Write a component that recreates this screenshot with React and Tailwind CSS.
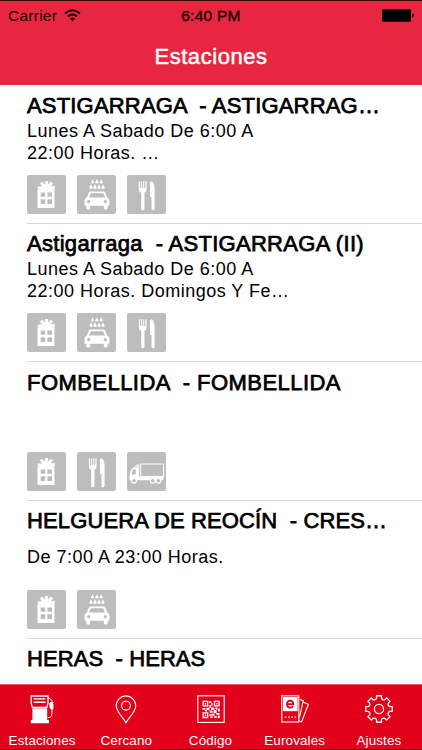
import { clsx } from 'clsx';

const stations = [
  { name: 'ASTIGARRAGA  - ASTIGARRAG…', spacing: 'tracking-[0.18px]', hours: ['Lunes A Sabado De 6:00 A', '22:00 Horas. …'], services: ['gift', 'wash', 'food'] },
  { name: 'Astigarraga  - ASTIGARRAGA (II)', spacing: 'tracking-[0.3px]', hours: ['Lunes A Sabado De 6:00 A', '22:00 Horas. Domingos Y Fe…'], services: ['gift', 'wash', 'food'] },
  { name: 'FOMBELLIDA  - FOMBELLIDA', spacing: 'tracking-[0.45px]', hours: [], services: ['gift', 'food', 'truck'] },
  { name: 'HELGUERA DE REOCÍN  - CRES…', spacing: 'tracking-[0.12px]', hours: ['De 7:00 A 23:00 Horas.'], services: ['gift', 'wash'] },
  { name: 'HERAS  - HERAS', spacing: 'tracking-[0.08px]', hours: [], services: [] },
];

function GiftIcon() {
  return (
    <svg className="size-full" viewBox="0 0 39 39" fill="#fff">
      <path fillRule="evenodd" d="M10.5 14.5H27.5V33H10.5ZM13.7 17.5V21.8H18.2V17.5ZM20.4 17.5V21.8H25V17.5ZM13.7 24.2V29H18.2V24.2ZM20.4 24.2V29H25V24.2Z" />
      <path d="M19 15.5L11 14.4L10.6 11.4L15 11.6L12.6 8.2L15.6 6.8L17.9 9.8L18 6H21L20.8 9.8L23.6 6.5L26.2 8.4L23.6 11.4L27.8 10.8L27.8 14.2Z" />
    </svg>
  );
}

function WashIcon() {
  return (
    <svg className="size-full" viewBox="0 0 39 39" fill="#fff">
      {[15.5, 19.8, 24.2].map((x) => (
        <path key={x} d={`M${x} 4.2l1.5 3a1.5 1.4 0 1 1-3 0z`} />
      ))}
      {[14, 18, 22, 26].map((x) => (
        <path key={x} d={`M${x} 9.2l1.6 3.4a1.6 1.5 0 1 1-3.2 0z`} />
      ))}
      <path
        fillRule="evenodd"
        d="M13.5 16.5H26.5Q27.7 16.5 28.2 17.6L30 22.2Q32.4 23.5 32.4 25.5V30.8H30.7V33Q30.7 34.7 28.8 34.7Q26.8 34.7 26.8 33V30.8H13.2V33Q13.2 34.7 11.2 34.7Q9.3 34.7 9.3 33V30.8H7.6V25.5Q7.6 23.5 10 22.2L11.8 17.6Q12.3 16.5 13.5 16.5ZM13.8 18.2L12 22.6H28L26.2 18.2ZM11.7 24.9A1.7 1.7 0 1 0 11.7 28.3A1.7 1.7 0 1 0 11.7 24.9ZM28.3 24.9A1.7 1.7 0 1 0 28.3 28.3A1.7 1.7 0 1 0 28.3 24.9Z"
      />
    </svg>
  );
}

function FoodIcon() {
  return (
    <svg className="size-full" viewBox="0 0 39 39" fill="#fff">
      <path d="M11.8 6.3H13.1V13H14.1V6.3H15.1V13H16.2V6.3H17.2V13H18.3V6.3H19.6V14.5Q19.6 17 17.5 17.7V33.8Q17.5 35.3 15.8 35.3Q14.2 35.3 14.2 33.8V17.7Q11.8 17 11.8 14.5Z" />
      <path d="M23 8Q23 6.2 24.6 6.2Q27.3 7.5 27.6 14V33.8Q27.6 35.3 26.1 35.3Q24.5 35.3 24.5 33.8V22H23Z" />
    </svg>
  );
}

function TruckIcon() {
  return (
    <svg className="size-full" viewBox="0 0 39 39">
      <rect x="13.6" y="12" width="23" height="12.4" fill="none" stroke="#fff" strokeWidth="1" />
      <path fill="#fff" fillRule="evenodd" d="M6 15.5H12V25H36.5V28.3H2.5V23.5L4 18ZM5.5 18.3L4.6 22.5H8.8V17.5H6Z" />
      <path d="M6 15.5L10 12.2H12.3V15.5Z" fill="#fff" opacity=".7" />
      {[7, 25.8, 31.4].map((x) => (
        <circle key={x} cx={x} cy="28.7" r="2.4" fill="#bdbdbd" stroke="#fff" strokeWidth="1.2" />
      ))}
    </svg>
  );
}

const serviceIcons = { gift: GiftIcon, wash: WashIcon, food: FoodIcon, truck: TruckIcon };

function PumpIcon() {
  return (
    <svg className="size-[30px]" viewBox="0 0 30 30" fill="none" stroke="#fff">
      <path d="M4.2 2H21V9.5L19.8 13.4H5.4L4.2 9.5Z" strokeWidth="1.3" />
      <path d="M6.6 4.9H18.6M6.6 8.2H18.6" strokeWidth="1.4" />
      <path d="M5.4 14.3H20.2V26H22V29.2H3.8V26H5.4Z" fill="#fff" stroke="none" />
      <path d="M21 3.2L25 6.4V9M25 15V19.5Q25 23 22.5 23.5L20.5 23.7" strokeWidth="1" />
      <path d="M23 8H26.4V15.2H23.6L22.4 13V9.5Z" fill="#fff" stroke="none" />
    </svg>
  );
}

function PinIcon() {
  return (
    <svg className="size-[30px]" viewBox="0 0 30 30" fill="none" stroke="#fff" strokeWidth="1.1">
      <path d="M15 28.8C12.8 24.3 5.2 17.6 5.2 11.7A9.8 9.8 0 0 1 24.8 11.7C24.8 17.6 17.2 24.3 15 28.8Z" />
      <circle cx="15" cy="11.7" r="4.4" />
    </svg>
  );
}

function QrIcon() {
  return (
    <svg className="size-[30px]" viewBox="0 0 30 30">
      <rect x="1.8" y="1.8" width="26.4" height="26.6" fill="none" stroke="#fff" strokeWidth="1.1" />
      <g fill="none" stroke="#fff" strokeWidth="1.3">
        <path d="M7.1 7.3H11.7V11.9H7.1ZM18.5 7.3H23.1V11.9H18.5ZM7.1 18.9H11.7V23.5H7.1Z" />
      </g>
      <path
        fill="#fff"
        d="M8.7 8.9h1.5v1.5h-1.5zM20.1 8.9h1.5v1.5h-1.5zM8.7 20.5h1.5v1.5h-1.5zM13.2 7h2v2h-2zM15.2 9h1.5v2.5h-1.5zM13.2 11.3h2v2.4h-2zM6.5 14h3v1.8h-3zM10.5 13.8h3v2.4h-3zM9 16h2v1.5h-2zM15 13.5h3.4v2.2h-3.4zM19.5 13.5h2v2h-2zM22 14.5h1.8v3h-1.8zM13.6 16.6h3v2.2h-3zM17.6 16h3v3h-3zM13.2 20.2h2.6v1.6h-2.6zM16.2 19.6h2.4v2.2h-2.4zM20.2 19h3.4v1.8h-3.4zM14.5 22.2h2.2v1.9h-2.2zM18.4 22h2.2v2h-2.2zM21.8 21.6h2v2.5h-2z"
      />
    </svg>
  );
}

function VoucherIcon() {
  return (
    <svg className="size-[30px]" viewBox="0 0 30 30" fill="none" stroke="#fff" strokeWidth="1.1">
      <path d="M19.6 5.5L23.3 6.7L19.4 23.5" />
      <path d="M23.4 8.3L28.4 10.2L21.6 27.7L19.5 27" />
      <rect x="1.8" y="1.8" width="17" height="26.2" />
      <rect x="3" y="3" width="14.6" height="14.2" fill="#fff" stroke="none" />
      <path d="M7.3 10.2H13.2Q13.3 6.7 10.2 6.6Q7 6.7 7 10.2Q7.1 13.6 10.3 13.7Q12.4 13.7 13.2 12.1" stroke="#e2001a" strokeWidth="1.8" />
      <path d="M4.7 23.2H16.5" strokeWidth="1.3" strokeDasharray="1.6 1.7" />
    </svg>
  );
}

function gearPath() {
  const at = (r, deg) => {
    const a = (deg * Math.PI) / 180;
    return `${(15 + r * Math.sin(a)).toFixed(2)} ${(15 - r * Math.cos(a)).toFixed(2)}`;
  };
  let d = '';
  for (let i = 0; i < 8; i++) {
    const t = i * 45;
    d += `${i ? 'L' : 'M'}${at(11.2, t - 12.5)}L${at(13.5, t - 10.5)}L${at(13.5, t + 10.5)}L${at(11.2, t + 12.5)}Q${at(9, t + 22.5)} ${at(11.2, t + 32.5)}`;
  }
  return d + 'Z';
}

function GearIcon() {
  return (
    <svg className="size-[30px]" viewBox="0 0 30 30" fill="none" stroke="#fff" strokeWidth="1.3" strokeLinejoin="round">
      <path d={gearPath()} />
      <circle cx="15" cy="15" r="4.6" />
    </svg>
  );
}

const tabs = [
  { label: 'Estaciones', Icon: PumpIcon },
  { label: 'Cercano', Icon: PinIcon },
  { label: 'Código', Icon: QrIcon },
  { label: 'Eurovales', Icon: VoucherIcon },
  { label: 'Ajustes', Icon: GearIcon },
];

function StatusBar() {
  return (
    <div className="grid grid-cols-3 items-center h-[29px] pl-2 pr-2 text-[15.5px] text-[#1c0206]">
      <div className="flex items-center gap-[7px]">
        <span className="tracking-[0.25px]">Carrier</span>
        <svg className="w-[17px] h-[13px]" viewBox="0 0 17 13" fill="none" stroke="#1c0206" strokeWidth="2">
          <path d="M1 4.6Q8.5 -2.2 16 4.6" />
          <path d="M3.9 7.6Q8.5 3.4 13.1 7.6" />
          <path d="M8.5 12.2L5.9 9.6Q8.5 7.4 11.1 9.6Z" fill="#1c0206" stroke="none" />
        </svg>
      </div>
      <span className="text-center tracking-[0.25px] [-webkit-text-stroke:0.4px_#1c0206]">6:40 PM</span>
      <svg className="justify-self-end w-8 h-[13px]" viewBox="0 0 32 13" fill="#000">
        <rect x="0" y="0.3" width="29" height="12.4" rx="1.2" />
        <path d="M30 4.6Q31.8 5 31.8 6.5Q31.8 8 30 8.4Z" />
      </svg>
    </div>
  );
}

function StationRow({ station }) {
  return (
    <li className="shrink-0 h-[138.3px] flex flex-col border-b border-[#d6d6d6]">
      <h2 className={clsx('h-[33.3px] pt-[6.3px] text-[22px] leading-[27px] whitespace-pre [-webkit-text-stroke:0.75px_#000]', station.spacing)}>
        {station.name}
      </h2>
      <div className="h-[45px] pt-[0.6px] flex flex-col justify-center text-[18px] leading-[22px] tracking-[0.48px] whitespace-pre">
        {station.hours.map((line) => <p key={line}>{line}</p>)}
      </div>
      <div className="flex gap-[11px] mt-[11px]">
        {station.services.map((s) => {
          const Icon = serviceIcons[s];
          return (
            <span key={s} className="size-[39px] rounded-[2px] bg-[#bdbdbd]">
              <Icon />
            </span>
          );
        })}
      </div>
    </li>
  );
}

export default function App() {
  return (
    <div className="w-[422px] h-[750px] flex flex-col overflow-hidden bg-white text-black font-['Liberation_Sans',Arial,sans-serif]">
      <header className="shrink-0 h-[85px] bg-[#e6273f] border-t border-[#3c050c]">
        <StatusBar />
        <h1 className="text-center text-[22px] leading-[53px] tracking-[0.55px] text-white [-webkit-text-stroke:0.5px_#fff]">Estaciones</h1>
      </header>
      <ul className="flex-1 min-h-0 flex flex-col overflow-hidden pt-[0.7px] pl-[27px]">
        {stations.map((s) => <StationRow key={s.name} station={s} />)}
      </ul>
      <nav className="shrink-0 h-[66px] flex bg-[#e2001a] border-t border-t-[#e8596a] border-b border-b-[#3c050c] pr-px">
        {tabs.map(({ label, Icon }) => (
          <div key={label} className="flex-1 flex flex-col items-center pt-[9px] text-white">
            <Icon />
            <span className="mt-[9px] text-[13.4px] leading-4 tracking-[0.15px]">{label}</span>
          </div>
        ))}
      </nav>
    </div>
  );
}
